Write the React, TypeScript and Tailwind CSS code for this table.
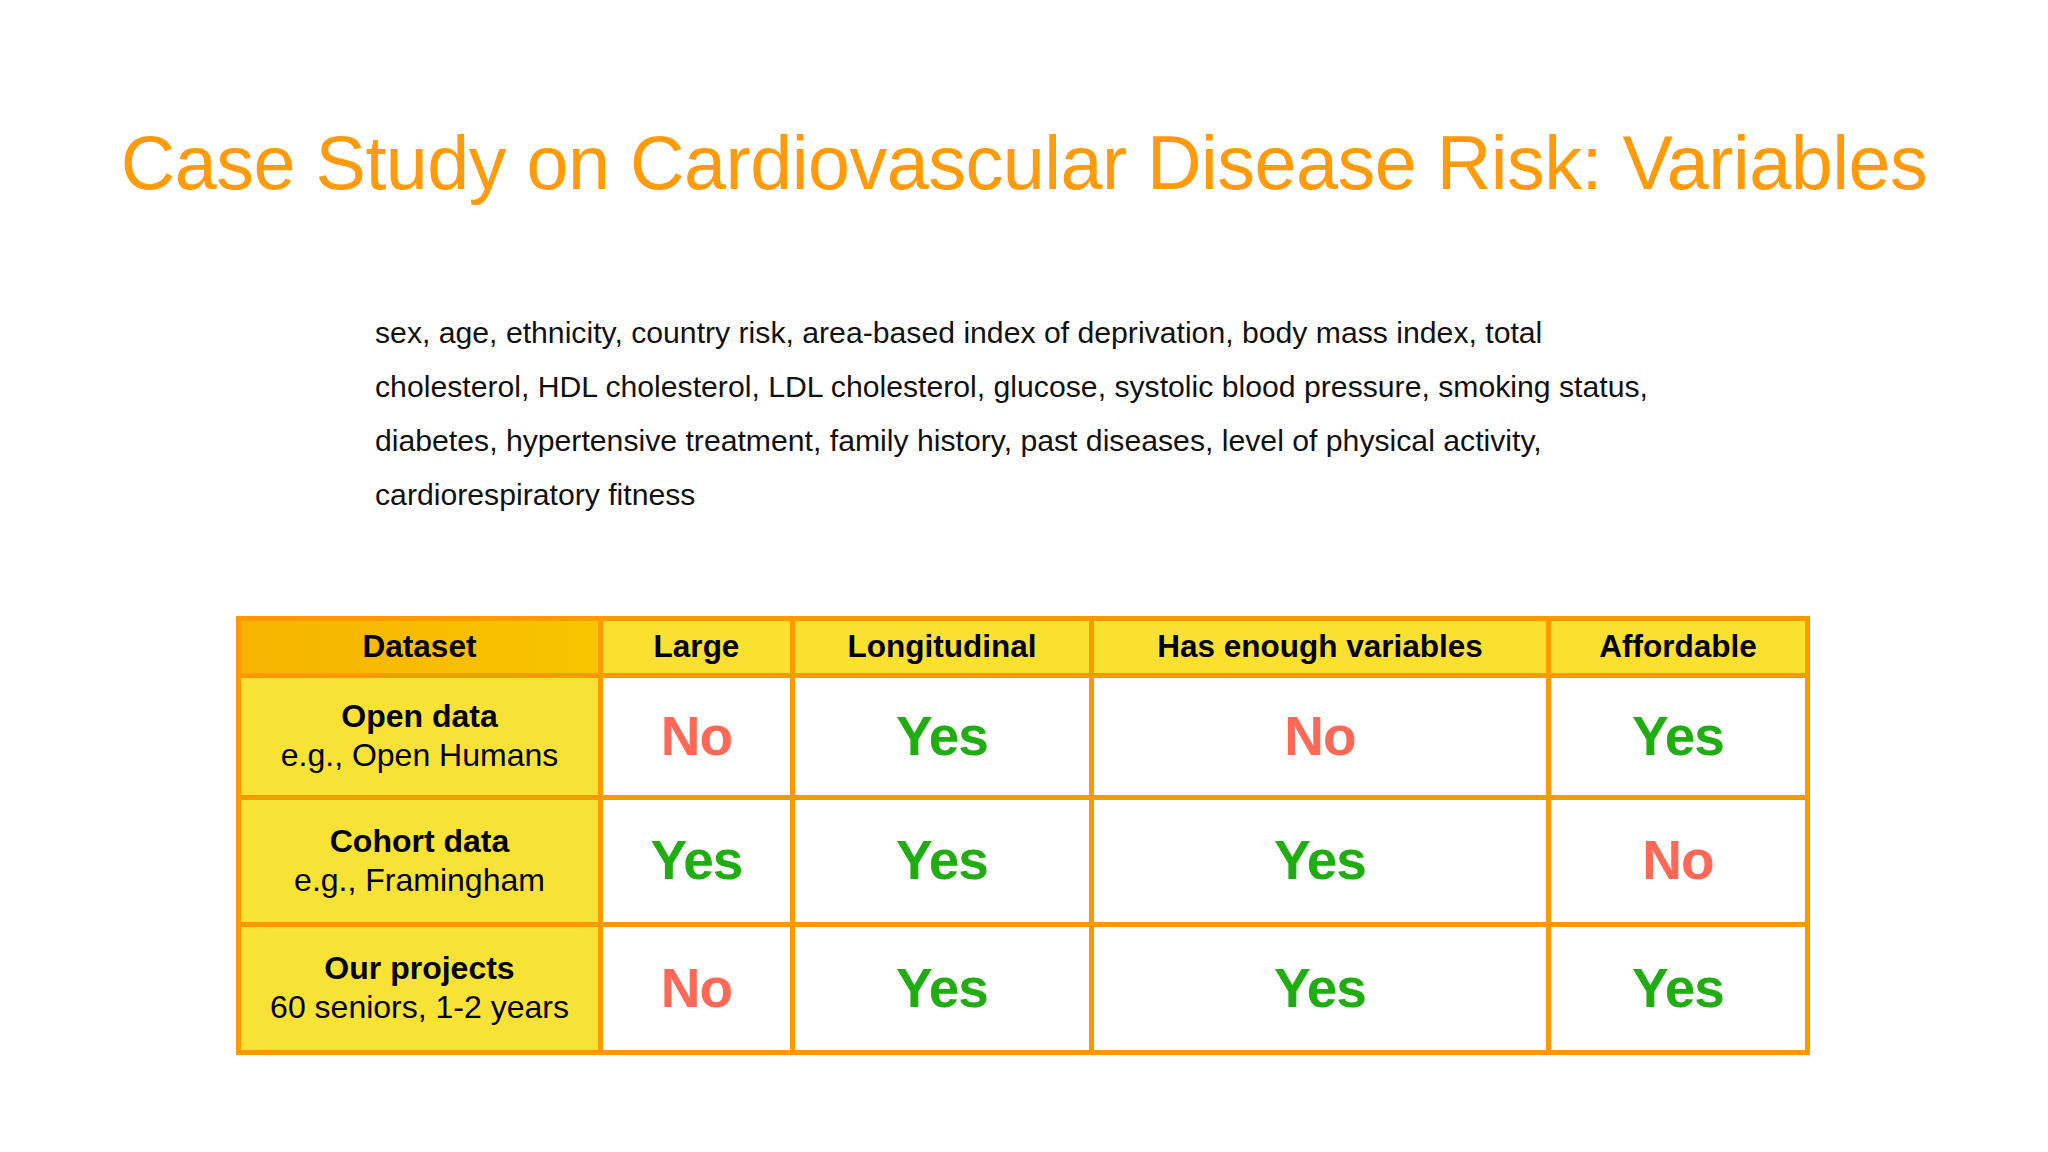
const font = { fontFamily: '"Liberation Sans", Arial, sans-serif' };

type Val = "Yes" | "No";

const rows: { name: string; sub: string; vals: Val[]; h: string }[] = [
  { name: "Open data", sub: "e.g., Open Humans", vals: ["No", "Yes", "No", "Yes"], h: "h-[117px]" },
  { name: "Cohort data", sub: "e.g., Framingham", vals: ["Yes", "Yes", "Yes", "No"], h: "h-[122px]" },
  { name: "Our projects", sub: "60 seniors, 1-2 years", vals: ["No", "Yes", "Yes", "Yes"], h: "h-[123px]" },
];

const headers = ["Large", "Longitudinal", "Has enough variables", "Affordable"];

const lines = [
  "sex, age, ethnicity, country risk, area-based index of deprivation, body mass index, total",
  "cholesterol, HDL cholesterol, LDL cholesterol, glucose, systolic blood pressure, smoking status,",
  "diabetes, hypertensive treatment, family history, past diseases, level of physical activity,",
  "cardiorespiratory fitness",
];

function Answer({ v }: { v: Val }) {
  return (
    <div className="flex items-center justify-center bg-white">
      <span
        className={
          "text-[55px] font-bold tracking-[-1px] " +
          (v === "Yes" ? "text-[#20ad12]" : "text-[#fe6957]")
        }
      >
        {v}
      </span>
    </div>
  );
}

export default function App() {
  return (
    <div className="w-[2048px] h-[1152px] bg-white text-black overflow-hidden" style={font}>
      <h1 className="pt-[126px] text-center text-[75.5px] leading-none text-[#ff9a0a] tracking-[-0.5px]">
        Case Study on Cardiovascular Disease Risk: Variables
      </h1>

      <div className="mt-[104px] ml-[375px] text-[30.2px] leading-[54px] text-[#111]">
        {lines.map((l) => (
          <div key={l} className="whitespace-nowrap">
            {l}
          </div>
        ))}
      </div>

      <div className="mt-[94px] ml-[236px] w-[1574px] bg-[#ff9900] p-[5px]">
        <div className="grid grid-cols-[357px_187px_294px_452px_254px] gap-[5px]">
          <div className="h-[52px] flex items-center justify-center bg-gradient-to-r from-[#f6b400] to-[#f9c400] text-[31.5px] font-bold">
            Dataset
          </div>
          {headers.map((h) => (
            <div key={h} className="h-[52px] flex items-center justify-center bg-[#f9e031] text-[31.5px] font-bold">
              {h}
            </div>
          ))}
          {rows.map((r) => (
            <>
              <div key={r.name} className={r.h + " flex flex-col items-center justify-center bg-[#f9e236] text-[32px] leading-[39px]"}>
                <span className="font-bold">{r.name}</span>
                <span>{r.sub}</span>
              </div>
              {r.vals.map((v, i) => (
                <Answer key={r.name + i} v={v} />
              ))}
            </>
          ))}
        </div>
      </div>
    </div>
  );
}
